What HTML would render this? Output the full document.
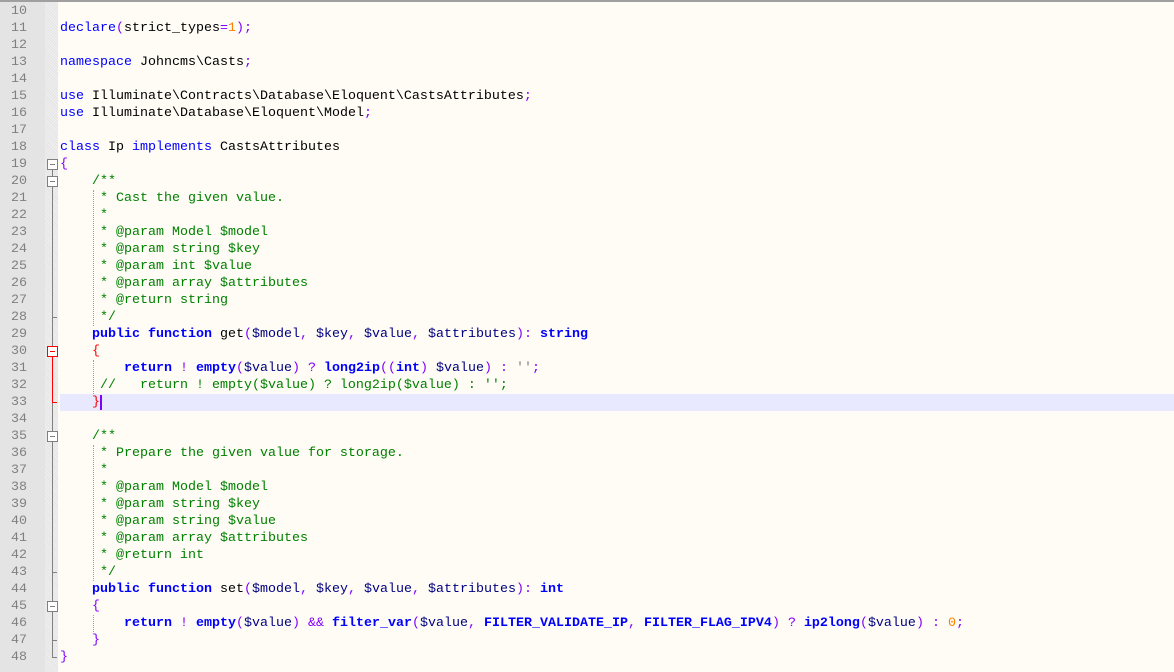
<!DOCTYPE html>
<html><head><meta charset="utf-8"><style>
body{margin:0;width:1174px;height:672px;overflow:hidden;background:#fefcf5;position:relative;font-family:"Liberation Mono",monospace;font-size:13.33px}
#top{position:absolute;left:0;top:0;width:1174px;height:2px;background:#a0a0a0}
#gut{position:absolute;left:0;top:2px;width:45px;height:670px;background:#e4e4e4}
#fold{position:absolute;left:45px;top:2px;width:13px;height:670px;background-color:#f0f0f0;background-image:repeating-linear-gradient(45deg,#e4e4e4 0 1px,transparent 1px 2px)}
.ln{position:absolute;left:0;width:27px;text-align:right;color:#808080;height:17px;line-height:17px}
.l{position:absolute;left:60px;height:17px;line-height:17px;white-space:pre;color:#000}
.k{color:#0000ff}.b{font-weight:bold}.o{color:#8000ff}.n{color:#ff8000}.c{color:#008000}.v{color:#000080}.s{color:#808080}
.box{position:absolute;left:47px;width:9px;height:9px;border:1px solid #808080;background:#fff}
.box:after{content:"";position:absolute;left:2px;top:4px;width:5px;height:1px;background:#808080}
.box.r{border-color:#f00}.box.r:after{background:#f00}
.vl{position:absolute;left:52px;width:1px;background:#808080}
.tk{position:absolute;left:52px;width:5px;height:1px;background:#808080}
.ig{position:absolute;width:0;border-left:1px dotted #a0a0a0}
</style></head><body>
<div id="top"></div><div id="gut"></div><div id="fold"></div>
<div style="position:absolute;left:60px;top:394px;width:1114px;height:17px;background:#e8e8ff"></div>
<div id="lines"></div>
<script>
var L=[
['10',''],
['11','<span class="k">declare</span><span class="o">(</span>strict_types<span class="o">=</span><span class="n">1</span><span class="o">);</span>'],
['12',''],
['13','<span class="k">namespace</span> Johncms\\Casts<span class="o">;</span>'],
['14',''],
['15','<span class="k">use</span> Illuminate\\Contracts\\Database\\Eloquent\\CastsAttributes<span class="o">;</span>'],
['16','<span class="k">use</span> Illuminate\\Database\\Eloquent\\Model<span class="o">;</span>'],
['17',''],
['18','<span class="k">class</span> Ip <span class="k">implements</span> CastsAttributes'],
['19','<span class="o">{</span>'],
['20','    <span class="c">/**</span>'],
['21','<span class="c">     * Cast the given value.</span>'],
['22','<span class="c">     *</span>'],
['23','<span class="c">     * @param Model $model</span>'],
['24','<span class="c">     * @param string $key</span>'],
['25','<span class="c">     * @param int $value</span>'],
['26','<span class="c">     * @param array $attributes</span>'],
['27','<span class="c">     * @return string</span>'],
['28','<span class="c">     */</span>'],
['29','    <span class="k b">public</span> <span class="k b">function</span> get<span class="o">(</span><span class="v">$model</span><span class="o">,</span> <span class="v">$key</span><span class="o">,</span> <span class="v">$value</span><span class="o">,</span> <span class="v">$attributes</span><span class="o">):</span> <span class="k b">string</span>'],
['30','    <span style="color:#f00">{</span>'],
['31','        <span class="k b">return</span> <span class="o">!</span> <span class="k b">empty</span><span class="o">(</span><span class="v">$value</span><span class="o">)</span> <span class="o">?</span> <span class="k b">long2ip</span><span class="o">((</span><span class="k b">int</span><span class="o">)</span> <span class="v">$value</span><span class="o">)</span> <span class="o">:</span> <span class="s">\'\'</span><span class="o">;</span>'],
['32','<span class="c">     //   return ! empty($value) ? long2ip($value) : \'\';</span>'],
['33','    <span style="color:#f00">}</span><span style="border-left:2px solid #8000ff"></span>'],
['34',''],
['35','    <span class="c">/**</span>'],
['36','<span class="c">     * Prepare the given value for storage.</span>'],
['37','<span class="c">     *</span>'],
['38','<span class="c">     * @param Model $model</span>'],
['39','<span class="c">     * @param string $key</span>'],
['40','<span class="c">     * @param string $value</span>'],
['41','<span class="c">     * @param array $attributes</span>'],
['42','<span class="c">     * @return int</span>'],
['43','<span class="c">     */</span>'],
['44','    <span class="k b">public</span> <span class="k b">function</span> set<span class="o">(</span><span class="v">$model</span><span class="o">,</span> <span class="v">$key</span><span class="o">,</span> <span class="v">$value</span><span class="o">,</span> <span class="v">$attributes</span><span class="o">):</span> <span class="k b">int</span>'],
['45','    <span class="o">{</span>'],
['46','        <span class="k b">return</span> <span class="o">!</span> <span class="k b">empty</span><span class="o">(</span><span class="v">$value</span><span class="o">)</span> <span class="o">&amp;&amp;</span> <span class="k b">filter_var</span><span class="o">(</span><span class="v">$value</span><span class="o">,</span> <span class="k b">FILTER_VALIDATE_IP</span><span class="o">,</span> <span class="k b">FILTER_FLAG_IPV4</span><span class="o">)</span> <span class="o">?</span> <span class="k b">ip2long</span><span class="o">(</span><span class="v">$value</span><span class="o">)</span> <span class="o">:</span> <span class="n">0</span><span class="o">;</span>'],
['47','    <span class="o">}</span>'],
['48','<span class="o">}</span>']
];
var h='';var T0=3;
for(var i=0;i<L.length;i++){var t=T0+i*17;
h+='<div class="ln" style="top:'+t+'px">'+L[i][0]+'</div><div class="l" style="top:'+t+'px">'+L[i][1]+'</div>';}
function y(n){return T0+(n-10)*17;}
h+='<div class="vl" style="top:'+(y(19)+13)+'px;height:'+(y(48)+8-y(19)-13)+'px"></div>';
h+='<div class="vl" style="top:'+(y(30)+13)+'px;height:'+(y(33)+8-y(30)-13)+'px;background:#f00"></div>';
h+='<div class="tk" style="top:'+(y(28)+8)+'px"></div><div class="tk" style="top:'+(y(33)+8)+'px;background:#f00"></div><div class="tk" style="top:'+(y(43)+8)+'px"></div><div class="tk" style="top:'+(y(47)+8)+'px"></div><div class="tk" style="top:'+(y(48)+8)+'px"></div>';
[19,20,35,45].forEach(function(n){h+='<div class="box" style="top:'+(y(n)+3)+'px"></div>';});
h+='<div class="box r" style="top:'+(y(30)+3)+'px"></div>';
[[21,29],[31,33],[36,44],[46,47]].forEach(function(p){h+='<div class="ig" style="left:93px;top:'+y(p[0])+'px;height:'+(y(p[1])-y(p[0]))+'px"></div>';});
document.getElementById('lines').innerHTML=h;
</script>
</body></html>
